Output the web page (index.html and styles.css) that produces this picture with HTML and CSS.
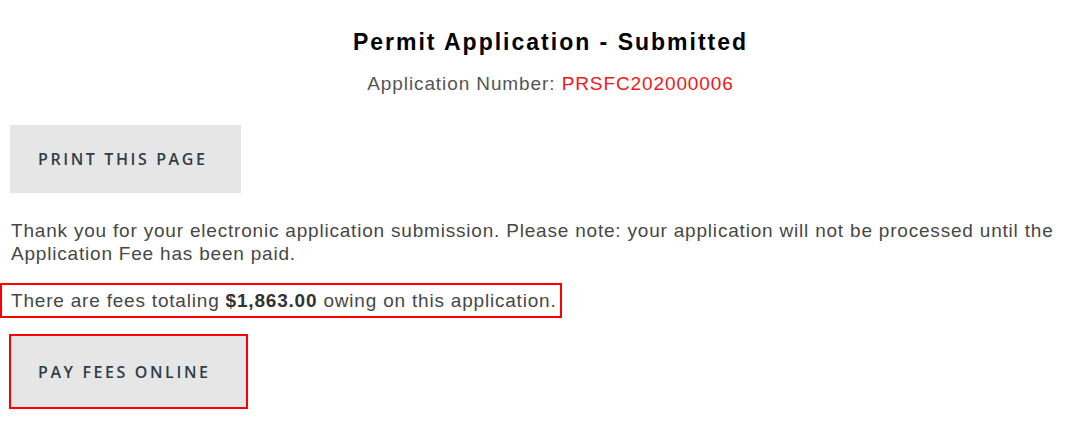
FILE: index.html
```html
<!DOCTYPE html>
<html>
<head>
    <title>Permit Application - Submitted</title>
    <link rel="stylesheet" href="styles.css">
</head>
<body>
    <div class="page">
        <div class="header">
            <h1>Permit Application - Submitted</h1>
            <div class="app-number">Application Number: <span class="number">PRSFC202000006</span></div>
        </div>

        <button class="btn btn-print">Print this page</button>

        <p class="note">
            Thank you for your electronic application submission. Please note: your application will not be processed until the
            Application Fee has been paid.
        </p>

        <p class="fees">There are fees totaling <strong>$1,863.00</strong> owing on this application.</p>

        <button class="btn btn-pay">Pay fees online</button>
    </div>
</body>
</html>
```

FILE: styles.css
```css
body {
    margin: 0;
    font-family: "Liberation Sans", Arial, sans-serif;
    background: white;
}
.page {
    padding: 29px 10px 0 10px;
}
.header {
    padding-left: 34px;
    text-align: center;
}
h1 {
    margin: 0;
    font-size: 23px;
    line-height: 26px;
    font-weight: bold;
    letter-spacing: 2px;
    color: #000;
}
.app-number {
    margin-top: 17px;
    font-size: 19px;
    line-height: 24px;
    letter-spacing: 0.9px;
    color: #555;
}
.number {
    color: #f01818;
}
.btn {
    display: block;
    background: #e6e6e6;
    border: none;
    padding: 0 0 0 28px;
    text-align: left;
    font-family: "Open Sans", sans-serif;
    font-size: 16px;
    font-weight: 600;
    letter-spacing: 2.6px;
    text-transform: uppercase;
    color: #2f3d48;
    cursor: pointer;
}
.btn-print {
    margin-top: 29px;
    width: 231px;
    height: 68px;
}
.note {
    margin: 26px 0 0 1px;
    font-size: 19px;
    line-height: 23px;
    letter-spacing: 0.8px;
    color: #474747;
}
.fees {
    display: inline-block;
    margin: 18px 0 0 -10px;
    padding: 4px 3px 4px 9px;
    border: 2px solid #f00;
    font-size: 19px;
    line-height: 23px;
    letter-spacing: 0.8px;
    color: #474747;
}
.fees strong {
    color: #333;
}
.btn-pay {
    margin: 16px 0 0 -1px;
    width: 239px;
    height: 75px;
    border: 2px solid #f00;
    padding-left: 27px;
}
```
